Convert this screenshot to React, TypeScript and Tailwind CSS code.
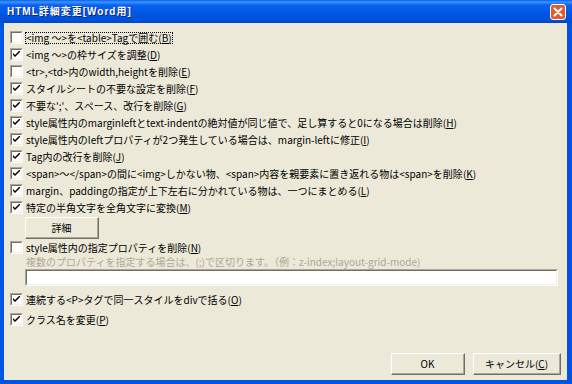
import React from "react";

const FONT = { fontFamily: '"MS UI Gothic", "Noto Sans CJK JP", sans-serif' };

function CheckBox({ checked }: { checked: boolean }) {
  return (
    <div className="w-[13px] h-[13px] shrink-0 border-t border-l border-t-[#ACA899] border-l-[#ACA899] border-b border-r border-b-white border-r-white">
      <div className="w-full h-full border-t border-l border-t-[#716F64] border-l-[#716F64] border-b border-r border-b-[#F1EFE2] border-r-[#F1EFE2] bg-white flex items-center justify-center">
        {checked && (
          <svg width="7" height="7" viewBox="0 0 7 7">
            <path d="M0 2 L0 4 L2 6 L7 1 L7 -1 L2 4 Z" fill="#000" />
          </svg>
        )}
      </div>
    </div>
  );
}

function Label({ pre, key2, focus, gray }: { pre: string; key2: string; focus?: boolean; gray?: boolean }) {
  return (
    <span className={`${focus ? "outline outline-1 outline-dotted outline-black" : ""} ${gray ? "text-[#ACA899]" : "text-black"} whitespace-nowrap`}>
      {pre}(<span className="underline">{key2}</span>)
    </span>
  );
}

function Row({ checked, pre, k, focus }: { checked: boolean; pre: string; k: string; focus?: boolean }) {
  return (
    <div className="h-[17px] flex items-center gap-[3px]">
      <CheckBox checked={checked} />
      <Label pre={pre} key2={k} focus={focus} />
    </div>
  );
}

function Btn({ children, w }: { children: React.ReactNode; w: string }) {
  return (
    <div className={`${w} h-[22px] border-t border-l border-t-white border-l-white border-b border-r border-b-[#716F64] border-r-[#716F64] bg-[#ECE9D8]`}>
      <div className="w-full h-full border-b border-r border-b-[#ACA899] border-r-[#ACA899] flex items-center justify-center text-black">
        {children}
      </div>
    </div>
  );
}

export default function App() {
  return (
    <div className="w-[572px] h-[384px] flex flex-col bg-[#0054E3] text-[10px] leading-none" style={FONT}>
      <div className="h-[23px] shrink-0 relative flex items-center pl-[7px] bg-[linear-gradient(to_bottom,#0A5FEA_0px,#3D95FF_2px,#0A62F2_5px,#0058E6_12px,#0050DA_20px,#0046C8_23px)]">
        <span className="text-white font-bold text-[10px] tracking-[1px]" style={{ fontFamily: '"Liberation Sans", "Noto Sans CJK JP", sans-serif', textShadow: "1px 1px 0 #0A2470" }}>
          HTML詳細変更[Word用]
        </span>
        <div className="absolute left-[550px] top-[4px] w-[16px] h-[16px] rounded-[3px] border border-white bg-[#E25B2C] flex items-center justify-center">
          <svg width="10" height="10" viewBox="0 0 10 10">
            <path d="M1.5 1.5 L8.5 8.5 M8.5 1.5 L1.5 8.5" stroke="#fff" strokeWidth="2" strokeLinecap="round" />
          </svg>
        </div>
      </div>
      <div className="flex-1 flex pl-[4px] pr-[5px] pb-[4px]">
        <div className="flex-1 bg-[#ECE9D8] flex flex-col pl-[6px] pt-[6px]">
          <Row checked={false} pre="<img ～>を<table>Tagで囲む" k="B" focus />
          <Row checked pre="<img ～>の枠サイズを調整" k="D" />
          <Row checked={false} pre="<tr>,<td>内のwidth,heightを削除" k="E" />
          <Row checked pre="スタイルシートの不要な設定を削除" k="F" />
          <Row checked pre="不要な';'、スペース、改行を削除" k="G" />
          <Row checked pre="style属性内のmarginleftとtext-indentの絶対値が同じ値で、足し算すると0になる場合は削除" k="H" />
          <Row checked pre="style属性内のleftプロパティが2つ発生している場合は、margin-leftに修正" k="I" />
          <Row checked pre="Tag内の改行を削除" k="J" />
          <Row checked pre="<span>～</span>の間に<img>しかない物、<span>内容を親要素に置き返れる物は<span>を削除" k="K" />
          <Row checked pre="margin、paddingの指定が上下左右に分かれている物は、一つにまとめる" k="L" />
          <Row checked pre="特定の半角文字を全角文字に変換" k="M" />
          <div className="pl-[15px] mt-[1px]">
            <Btn w="w-[74px]">詳細</Btn>
          </div>
          <div>
            <Row checked={false} pre="style属性内の指定プロパティを削除" k="N" />
          </div>
          <div className="pl-[16px] h-[12px] flex items-center text-[#ACA899] whitespace-nowrap">
            複数のプロパティを指定する場合は、(;)で区切ります。（例：z-index;layout-grid-mode)
          </div>
          <div className="ml-[15px] mr-[9px] mt-[1px] h-[17px] border-t border-l border-t-[#ACA899] border-l-[#ACA899] border-b border-r border-b-white border-r-white">
            <div className="w-full h-full bg-white border-t border-l border-t-[#716F64] border-l-[#716F64] border-b border-r border-b-[#F1EFE2] border-r-[#F1EFE2]" />
          </div>
          <div className="mt-[5px]">
            <Row checked pre="連続する<P>タグで同一スタイルをdivで括る" k="O" />
          </div>
          <div className="mt-[3px]">
            <Row checked pre="クラス名を変更" k="P" />
          </div>
          <div className="flex-1" />
          <div className="flex justify-end gap-[8px] pr-[6px] pb-[5px]">
            <Btn w="w-[74px]">OK</Btn>
            <Btn w="w-[88px]">キャンセル(<span className="underline">C</span>)</Btn>
          </div>
        </div>
      </div>
    </div>
  );
}
